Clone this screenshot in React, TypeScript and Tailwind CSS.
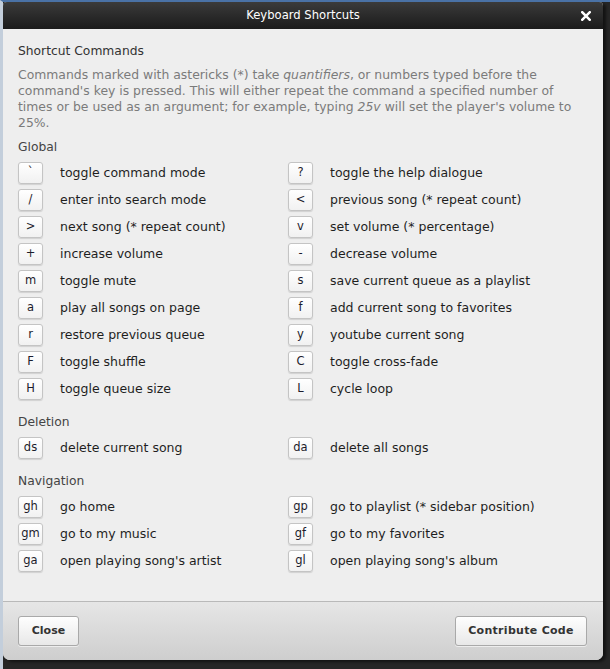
import React from "react";

type Item = [string, string];

const globalItems: Item[] = [
  ["`", "toggle command mode"],
  ["?", "toggle the help dialogue"],
  ["/", "enter into search mode"],
  ["<", "previous song (* repeat count)"],
  [">", "next song (* repeat count)"],
  ["v", "set volume (* percentage)"],
  ["+", "increase volume"],
  ["-", "decrease volume"],
  ["m", "toggle mute"],
  ["s", "save current queue as a playlist"],
  ["a", "play all songs on page"],
  ["f", "add current song to favorites"],
  ["r", "restore previous queue"],
  ["y", "youtube current song"],
  ["F", "toggle shuffle"],
  ["C", "toggle cross-fade"],
  ["H", "toggle queue size"],
  ["L", "cycle loop"],
];

const deletionItems: Item[] = [
  ["ds", "delete current song"],
  ["da", "delete all songs"],
];

const navItems: Item[] = [
  ["gh", "go home"],
  ["gp", "go to playlist (* sidebar position)"],
  ["gm", "go to my music"],
  ["gf", "go to my favorites"],
  ["ga", "open playing song's artist"],
  ["gl", "open playing song's album"],
];

function Row({ k, label }: { k: string; label: string }) {
  return (
    <div className="flex items-center h-[22px]">
      <div className="w-[25px] h-[22px] shrink-0 flex items-center justify-center rounded-[3px] border border-[#c4c4c4] bg-gradient-to-b from-white to-[#f1f1f1] shadow-[0_1px_1px_rgba(0,0,0,0.12)] text-[11.5px] text-[#1c1c2c] leading-none">
        {k}
      </div>
      <span className="ml-[17px] text-[12.5px] text-[#1e1e1e] whitespace-nowrap leading-[16px]">{label}</span>
    </div>
  );
}

function Section({ title, items, first }: { title: string; items: Item[]; first?: boolean }) {
  return (
    <div className={first ? "mt-[8px]" : "mt-[14px]"}>
      <div className="text-[12.3px] leading-[16px] text-[#444]">{title}</div>
      <div className="mt-[7px] grid grid-cols-[270px_1fr] gap-y-[5px]">
        {items.map(([k, l], i) => (
          <Row key={i} k={k} label={l} />
        ))}
      </div>
    </div>
  );
}

export default function App() {
  return (
    <div
      className="w-[610px] h-[669px] overflow-hidden bg-[#262626] border-t-[2px] border-t-[#4a72a6] border-l-[3px] border-l-[#c3cedb]"
      style={{ fontFamily: '"DejaVu Sans", Verdana, sans-serif' }}
    >
      <div className="w-[600px] h-[658px] flex flex-col rounded-t-[4px] rounded-b-[7px] overflow-hidden bg-[#eeeeee] shadow-[3px_2px_3px_rgba(0,0,0,0.5)]">
        <div className="h-[27px] shrink-0 relative flex items-center justify-center bg-gradient-to-b from-[#3b3b3b] to-[#1b1b1b]">
          <span className="text-white text-[11.6px] leading-none">Keyboard Shortcuts</span>
          <svg className="absolute right-[12px] top-[9px]" width="10" height="10" viewBox="0 0 10 10">
            <path d="M1.2 1.2 L8.8 8.8 M8.8 1.2 L1.2 8.8" stroke="white" strokeWidth="2.5" strokeLinecap="square" />
          </svg>
        </div>
        <div className="flex-1 px-[15px] pt-[13px]">
          <div className="text-[12.3px] leading-[18px] text-[#333]">Shortcut Commands</div>
          <p className="mt-[7px] text-[12.4px] leading-[16px] text-[#7b7b7b] whitespace-nowrap">
            Commands marked with astericks (*) take <i>quantifiers</i>, or numbers typed before the
            <br />
            command's key is pressed. This will either repeat the command a specified number of
            <br />
            times or be used as an argument; for example, typing <i>25v</i> will set the player's volume to
            <br />
            25%.
          </p>
          <Section title="Global" items={globalItems} first />
          <Section title="Deletion" items={deletionItems} />
          <Section title="Navigation" items={navItems} />
        </div>
        <div className="h-[59px] shrink-0 border-t border-t-[#b9b9b9] bg-gradient-to-b from-[#e6e6e6] to-[#cecece] flex items-start justify-between pl-[15px] pr-[16px] pt-[14px]">
          <button className="w-[61px] h-[30px] rounded-[3px] border border-[#a9a9a9] bg-gradient-to-b from-[#fefefe] to-[#e8e8e8] text-[11px] font-bold text-[#333] shadow-[0_1px_0_rgba(255,255,255,0.6)]">
            Close
          </button>
          <button className="w-[132px] h-[30px] rounded-[3px] border border-[#a9a9a9] bg-gradient-to-b from-[#fefefe] to-[#e8e8e8] text-[11px] font-bold text-[#333] tracking-[0.3px] shadow-[0_1px_0_rgba(255,255,255,0.6)]">
            Contribute Code
          </button>
        </div>
      </div>
    </div>
  );
}
